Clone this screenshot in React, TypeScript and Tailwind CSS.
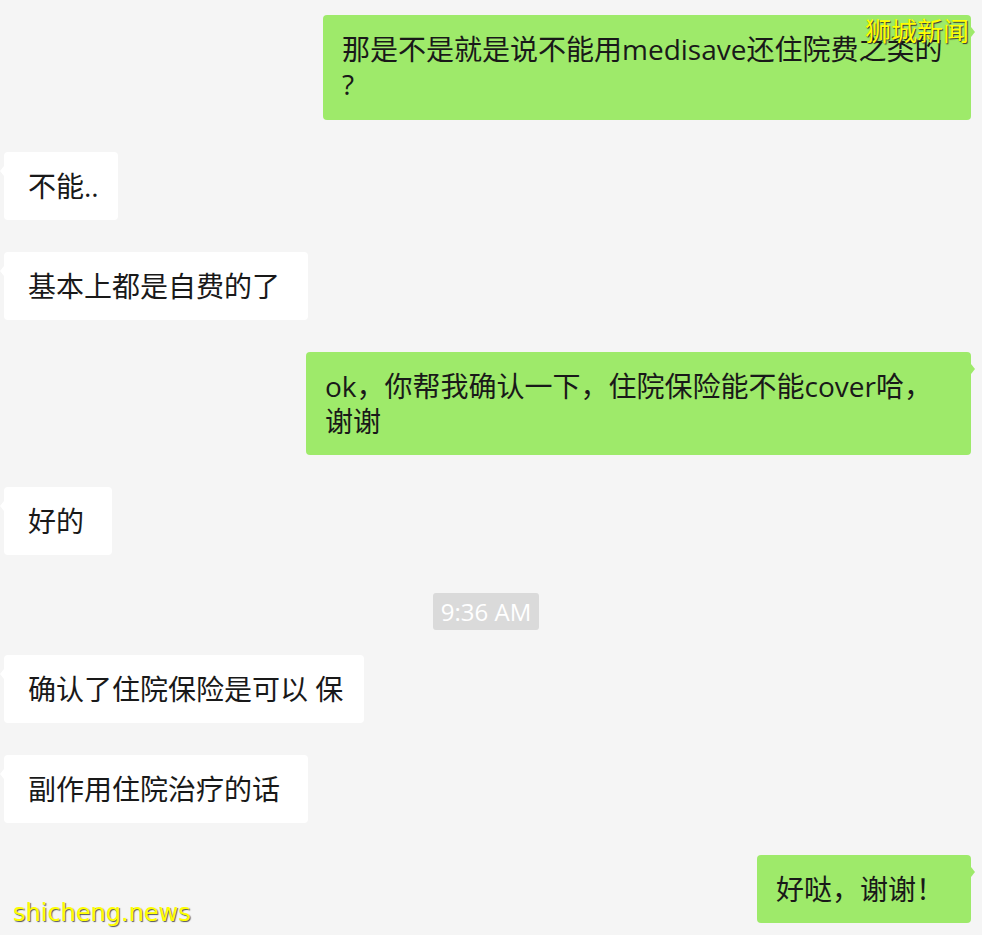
import React from 'react';

const FONT = { fontFamily: '"Open Sans", "Noto Sans CJK SC", sans-serif' };

const Left = ({ w, children }: { w: string; children: React.ReactNode }) => (
  <div className={`relative self-start ml-[4px] bg-white rounded-[4px] pl-[24px] pr-[10px] pt-[17px] pb-[16px] text-[28px] leading-[35px] text-[#191919] whitespace-nowrap ${w}`}>
    <span className="absolute left-[-4px] top-[14px] w-0 h-0 border-y-[5px] border-y-transparent border-r-[4px] border-r-white" />
    {children}
  </div>
);

const Right = ({ w, children }: { w: string; children: React.ReactNode }) => (
  <div className={`relative self-end mr-[11px] bg-[#9eea6a] rounded-[4px] pl-[19px] pr-[10px] pt-[17px] pb-[16px] text-[28px] leading-[35px] text-[#191919] whitespace-nowrap ${w}`}>
    <span className="absolute right-[-4px] top-[12px] w-0 h-0 border-y-[5px] border-y-transparent border-l-[4px] border-l-[#9eea6a]" />
    {children}
  </div>
);

export default function App() {
  return (
    <div className="relative w-[982px] h-[935px] overflow-hidden bg-[#f5f5f5] flex flex-col pt-[15px]" style={FONT}>
      <Right w="w-[648px] !pb-[18px]">
        那是不是就是说不能用medisave还住院费之类的
        <br />?
      </Right>

      <div className="mt-[32px] flex flex-col">
        <Left w="w-[114px]">不能..</Left>
      </div>
      <div className="mt-[32px] flex flex-col">
        <Left w="w-[304px]">基本上都是自费的了</Left>
      </div>
      <div className="mt-[32px] flex flex-col">
        <Right w="w-[665px]">
          ok，你帮我确认一下，住院保险能不能cover哈，
          <br />谢谢
        </Right>
      </div>
      <div className="mt-[32px] flex flex-col">
        <Left w="w-[108px]">好的</Left>
      </div>

      <div className="mt-[38px] flex justify-center">
        <div className="mr-[10px] w-[106px] h-[37px] rounded-[3px] bg-[#dadada] text-white text-[24px] leading-[37px] text-center whitespace-nowrap">
          9:36 AM
        </div>
      </div>

      <div className="mt-[25px] flex flex-col">
        <Left w="w-[360px]">确认了住院保险是可以 保</Left>
      </div>
      <div className="mt-[32px] flex flex-col">
        <Left w="w-[304px]">副作用住院治疗的话</Left>
      </div>
      <div className="mt-[32px] flex flex-col">
        <Right w="w-[214px]">好哒，谢谢！</Right>
      </div>

      <div
        className="absolute right-[13px] top-[13px] text-[26px] leading-[34px] text-[#ffff00] [text-shadow:1px_1px_1px_#333] whitespace-nowrap"
        style={{ fontFamily: '"Noto Sans CJK SC", sans-serif' }}
      >
        狮城新闻
      </div>
      <div
        className="absolute left-[13px] top-[896px] text-[24px] leading-[34px] text-[#ffff00] [text-shadow:1px_1px_1px_#555] whitespace-nowrap"
        style={{ fontFamily: '"DejaVu Sans", sans-serif' }}
      >
        shicheng.news
      </div>
    </div>
  );
}
